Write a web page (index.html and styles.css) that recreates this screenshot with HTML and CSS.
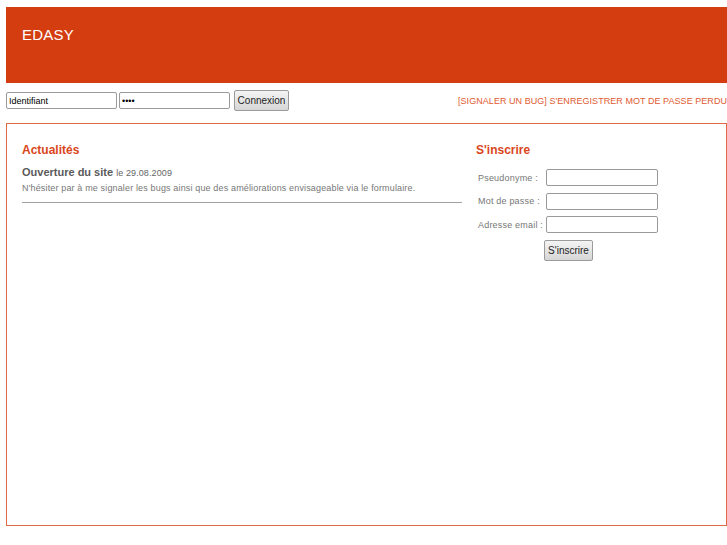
FILE: index.html
```html
<!DOCTYPE html>
<html lang="fr">
<head>
<meta charset="utf-8">
<title>EDASY</title>
<link rel="stylesheet" href="styles.css">
</head>
<body>
<div class="header"><h1 class="logo">EDASY</h1></div>
<div class="loginbar">
  <form class="login">
    <input class="field" type="text" value="Identifiant">
    <input class="field" type="password" value="aaaa">
    <button class="btn" type="button">Connexion</button>
  </form>
  <div class="links"><a href="#">[SIGNALER UN BUG]</a> <a href="#">S'ENREGISTRER</a> <a href="#">MOT DE PASSE PERDU</a></div>
</div>
<div class="content">
  <div class="news">
    <h2 class="title">Actualités</h2>
    <div class="item">
      <div class="item-head"><b>Ouverture du site</b> <span class="date">le 29.08.2009</span></div>
      <p class="item-text">N'hésiter par à me signaler les bugs ainsi que des améliorations envisageable via le formulaire.</p>
    </div>
  </div>
  <div class="register">
    <h2 class="title">S'inscrire</h2>
    <form class="reg-form">
      <label class="row"><span class="lbl">Pseudonyme :</span><input class="rfield" type="text"></label>
      <label class="row"><span class="lbl">Mot de passe :</span><input class="rfield" type="password"></label>
      <label class="row"><span class="lbl">Adresse email :</span><input class="rfield" type="text"></label>
      <div class="row-btn"><button class="btn rbtn" type="button">S'inscrire</button></div>
    </form>
  </div>
</div>
</body>
</html>
```
FILE: styles.css
```css
html, body { background: #fff; }
body {
  margin: 7px 0 0 6px;
  font-family: "Liberation Sans", Arial, sans-serif;
  color: #666;
}
.header {
  height: 76px;
  background: #d33d10;
  padding: 18px 0 0 16px;
  box-sizing: border-box;
}
.logo {
  margin: 0;
  font-size: 15px;
  line-height: 19px;
  font-weight: normal;
  color: #fff;
  letter-spacing: 0.2px;
}
.loginbar {
  height: 40px;
  display: flex;
  align-items: flex-start;
  justify-content: space-between;
  box-sizing: border-box;
  padding-top: 7px;
}
.login {
  display: flex;
  align-items: center;
  height: 21px;
  margin: 0;
}
.field {
  width: 111px;
  height: 17px;
  box-sizing: border-box;
  border: 1px solid #9a9a9a;
  border-radius: 2px;
  padding: 0 2px;
  font: 9px "Liberation Sans", Arial, sans-serif;
  color: #000;
  margin: 0 2px 0 0;
}
.field + .field { margin-right: 4px; }
.btn {
  height: 21px;
  box-sizing: border-box;
  border: 1px solid #9b9b9b;
  border-radius: 2px;
  background: linear-gradient(#f4f4f4, #d6d6d6);
  font: 10px "Liberation Sans", Arial, sans-serif;
  color: #222;
  padding: 0;
  margin: 0;
}
.login .btn { width: 55px; }
.links {
  height: 21px;
  line-height: 23px;
  font-size: 9px;
  letter-spacing: 0.05px;
  white-space: nowrap;
}
.links a {
  color: #e05a30;
  text-decoration: none;
}
.content {
  height: 403px;
  box-sizing: border-box;
  border: 1px solid #e06a45;
  padding: 18px 0 0 15px;
  display: flex;
}
.title {
  margin: 0;
  font-size: 12px;
  line-height: 16px;
  font-weight: bold;
  color: #d9461b;
}
.news { width: 440px; }
.item {
  margin-top: 7px;
  border-bottom: 1px solid #a0a0a0;
  padding-bottom: 7px;
}
.item-head {
  font-size: 11px;
  line-height: 14px;
  color: #5a5a5a;
}
.date { font-size: 9px; color: #666; letter-spacing: 0.1px; }
.item-text {
  margin: 2px 0 0 0;
  font-size: 9px;
  line-height: 13px;
  color: #777;
  letter-spacing: 0.15px;
}
.register {
  margin-left: 14px;
}
.reg-form {
  margin: 11px 0 0 0;
  display: flex;
  flex-direction: column;
  gap: 6.5px;
}
.row {
  display: flex;
  align-items: center;
  height: 17px;
}
.lbl {
  width: 70px;
  flex: none;
  padding-left: 2px;
  box-sizing: border-box;
  font-size: 9px;
  color: #777;
  letter-spacing: 0.2px;
  white-space: nowrap;
}
.rfield {
  width: 112px;
  height: 17px;
  box-sizing: border-box;
  border: 1px solid #9a9a9a;
  border-radius: 2px;
  margin: 0;
}
.row-btn {
  padding-left: 68px;
  margin-top: 0.5px;
}
.rbtn { width: 49px; }
```
